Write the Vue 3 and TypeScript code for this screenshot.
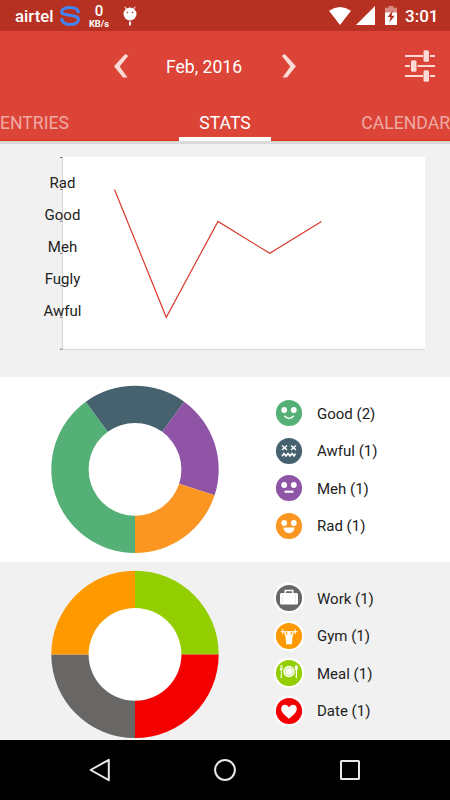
<script setup lang="ts">
interface Slice {
  name: string
  count: number
  color: string
}

const moods: Slice[] = [
  { name: 'Good', count: 2, color: '#54b077' },
  { name: 'Awful', count: 1, color: '#46626f' },
  { name: 'Meh', count: 1, color: '#8f54a5' },
  { name: 'Rad', count: 1, color: '#fb9623' },
]

const activities: Slice[] = [
  { name: 'Work', count: 1, color: '#686765' },
  { name: 'Gym', count: 1, color: '#ff9900' },
  { name: 'Meal', count: 1, color: '#92ce00' },
  { name: 'Date', count: 1, color: '#f50000' },
]

const OUTER = 83.7
const INNER = 46.4

function point(radius: number, turn: number): string {
  const angle = turn * Math.PI * 2
  return `${(84 + radius * Math.sin(angle)).toFixed(2)} ${(84.4 - radius * Math.cos(angle)).toFixed(2)}`
}

// Slices run clockwise, starting at the bottom of the ring.
function ring(slices: Slice[]) {
  const total = slices.reduce((sum, s) => sum + s.count, 0)
  let start = 0.5
  return slices.map((s) => {
    const end = start + s.count / total
    const large = end - start > 0.5 ? 1 : 0
    const d =
      `M${point(OUTER, start)}A${OUTER} ${OUTER} 0 ${large} 1 ${point(OUTER, end)}` +
      `L${point(INNER, end)}A${INNER} ${INNER} 0 ${large} 0 ${point(INNER, start)}Z`
    start = end
    return { d, color: s.color }
  })
}

const charts = [
  { key: 'moods', slices: moods, paths: ring(moods) },
  { key: 'activities', slices: activities, paths: ring(activities) },
]

const levels = ['Rad', 'Good', 'Meh', 'Fugly', 'Awful']
const ticks = [0, 1, 2, 3, 4, 5, 6]
const history = [1, 5, 2, 3, 2]
const line = history.map((v, i) => `${114.5 + i * 51.75},${13.5 + v * 31.95}`).join(' ')
</script>

<template>
  <div class="screen">
    <header class="status">
      <span class="carrier">airtel</span>
      <svg class="swirl" width="20" height="20" viewBox="0 0 20 20" fill="none" stroke="#4285f4" stroke-width="3">
        <path d="M18.600 7.200C18.200 3.400 14.500 1.500 10 1.500C5 1.500 1.600 3.300 1.600 6C1.600 10.200 18.400 8.300 18.400 13C18.400 16.600 14.800 18.500 10 18.500C5.500 18.500 1.900 16.500 1.500 12.200" />
      </svg>
      <span class="speed"><b>0</b><small>KB/s</small></span>
      <svg class="bug" width="14" height="20" viewBox="0 0 14 20">
        <path d="M3.200 3L1.800.6M10.800 3L12.200.6" stroke="#fff" stroke-width="1" />
        <circle cx="7" cy="8" r="6.500" fill="#fff" />
        <path d="M6.100 15.500h1.800v4H6.100z" fill="#fff" />
        <circle cx="4.400" cy="6.500" r=".8" fill="#b73122" />
        <circle cx="9.600" cy="6.500" r=".8" fill="#b73122" />
      </svg>
      <span class="grow"></span>
      <svg class="wifi" width="22" height="18" viewBox="0 0 22 18"><path d="M0 3.800Q11-3.600 22 3.800L11 18Z" fill="#fff" /></svg>
      <svg class="cell" width="19" height="19" viewBox="0 0 19 19"><path d="M19 0V19H0Z" fill="#fff" /></svg>
      <svg class="battery" width="12" height="19" viewBox="0 0 12 19">
        <path d="M3.500 0h5v1.800H12V7H0V1.800h3.500z" fill="#d9897f" />
        <path d="M0 6.500h12V19H0z" fill="#fff" />
        <path d="M7.800 4.500L2.500 11h3l-1.300 5.500L9.800 9.700H6.600z" fill="#b73122" />
      </svg>
      <span class="clock">3:01</span>
    </header>

    <div class="appbar">
      <div class="monthbar">
        <svg class="prev" width="15" height="24" viewBox="0 0 15 24"><path d="M14.300 1.800L11.200 0L0 12.300L9 23.500H13.500L5.700 12.500Z" fill="#fbd9d6" /></svg>
        <span class="month">Feb, 2016</span>
        <svg class="next" width="15" height="24" viewBox="0 0 15 24"><path d="M.7 1.800L3.800 0L15 12.300L6 23.500H1.500L9.300 12.500Z" fill="#fbd9d6" /></svg>
        <svg class="tune" width="30" height="32" viewBox="0 0 30 32" fill="#fbd9d6">
          <path d="M0 5h18v2H0zM25 5h5v2h-5zM0 15h5v2H0zM12.500 15H30v2H12.500zM0 25h18v2H0zM25 25h5v2h-5z" />
          <rect x="18.500" y=".3" width="5.500" height="11.500" rx="1.500" />
          <rect x="6" y="10.300" width="5.500" height="11.500" rx="1.500" />
          <rect x="18.500" y="20.300" width="5.500" height="11.500" rx="1.500" />
        </svg>
      </div>
      <nav class="tabs">
        <span class="tab side">ENTRIES</span>
        <span class="tab active">STATS</span>
        <span class="tab side last">CALENDAR</span>
      </nav>
    </div>

    <section class="trend">
      <svg width="450" height="233" viewBox="0 0 450 233">
        <path d="M62 13h363v192H62z" fill="#fff" />
        <path d="M62.500 13v192M62 205.300h363" stroke="#d6d6d6" fill="none" />
        <path v-for="t in ticks" :key="t" :d="`M60 ${13.500 + t * 31.950}h2.500`" stroke="#777" />
        <polyline :points="line" fill="none" stroke="#d83a2d" stroke-width="1.200" />
        <text v-for="(l, i) in levels" :key="l" class="level" x="62.500" :y="44 + i * 32">{{ l }}</text>
      </svg>
    </section>

    <section v-for="c in charts" :key="c.key" class="breakdown" :class="c.key">
      <svg class="ring" width="168" height="169" viewBox="0 0 168 169">
        <circle cx="84" cy="84.400" r="47" fill="#fff" />
        <path v-for="p in c.paths" :key="p.color" :d="p.d" :fill="p.color" />
      </svg>
      <ul class="legend">
        <li v-for="s in c.slices" :key="s.name">
          <svg width="32" height="32" viewBox="-16 -16 32 32" fill="#fff">
            <circle r="15.300" />
            <circle r="13.100" :fill="s.color" />
            <g v-if="s.name === 'Good'">
              <circle cx="-4.800" cy="-3" r="2.900" /><circle cx="4.800" cy="-3" r="2.900" />
              <path d="M-4.700 2.800Q0 8.200 4.700 2.800" fill="none" stroke="#fff" stroke-width="1.500" />
            </g>
            <g v-else-if="s.name === 'Awful'" fill="none" stroke="#fff" stroke-width="1.400">
              <path d="M-7-5.500L-2-1M-7-1L-2-5.500M2-5.500L7-1M2-1L7-5.500" />
              <path d="M-7 5.200L-5 2.500L-3 5L-1 2.500L1 5L3 2.500L5 5L6.500 2.700" stroke-width="1.600" />
            </g>
            <g v-else-if="s.name === 'Meh'">
              <circle cx="-4.800" cy="-3" r="2.900" /><circle cx="4.800" cy="-3" r="2.900" />
              <path d="M-4.500 2.600h9v2.200h-9z" />
            </g>
            <g v-else-if="s.name === 'Rad'">
              <circle cx="-4.800" cy="-3" r="2.900" /><circle cx="4.800" cy="-3" r="2.900" />
              <path d="M-5.500 1.500H5.500C5 9-5 9-5.500 1.500Z" />
            </g>
            <g v-else-if="s.name === 'Work'">
              <rect x="-9" y="-5" width="18" height="11.500" rx="1.500" />
              <path d="M-3.800-5v-2.500h7.600V-5" fill="none" stroke="#fff" stroke-width="1.400" />
              <path d="M-6.500-5V6.500M6.500-5V6.500" stroke="#d0cfcd" stroke-width=".4" />
            </g>
            <g v-else-if="s.name === 'Gym'">
              <path d="M-8.500-4.300h17M-6.200-7v5.200M6.200-7v5.200" stroke="#fff" stroke-width="1" />
              <path d="M-5-4.300L-3.600.3L-2.800 8.200H2.900L3.600.3L5-4.300H3.700L2.300-.9H-2.300L-3.700-4.300Z" />
              <circle cy="-2.800" r="2" />
            </g>
            <g v-else-if="s.name === 'Meal'">
              <circle cy="-1.500" r="5.700" />
              <circle cy="-1.500" r="4" fill="none" stroke="#92ce00" stroke-width=".5" />
              <path d="M-9-8v4.200q0 1 .8 1.400L-8.400 5h1.200l-.2-7.400q.9-.4.900-1.400V-8h-.5v3.500h-.5V-8h-.6v3.500h-.5V-8z" />
              <ellipse cx="7.300" cy="-5.300" rx="1.600" ry="2.600" />
              <path d="M6.800-3h1.100L8.100 5H6.600z" />
            </g>
            <path v-else d="M0 7.800C-3 4.800-7.800 2-7.800-2.200C-7.800-7-2-7.600 0-3.600C2-7.600 7.800-7 7.800-2.200C7.800 2 3 4.800 0 7.800Z" />
          </svg>
          <span>{{ s.name }} ({{ s.count }})</span>
        </li>
      </ul>
    </section>

    <footer class="navbar">
      <svg width="24" height="26" viewBox="0 0 24 26"><path d="M2.600 13L20.800 2.800V23.200Z" /></svg>
      <svg width="24" height="26" viewBox="0 0 24 26"><circle cx="12" cy="13" r="9.900" /></svg>
      <svg width="24" height="26" viewBox="0 0 24 26"><rect x="3" y="4" width="18" height="18" rx=".5" /></svg>
    </footer>
  </div>
</template>

<style>
body {
  margin: 0;
  background: #f1f1f1;
}
</style>

<style scoped>
.screen {
  display: flex;
  flex-direction: column;
  width: 450px;
  height: 800px;
  overflow: hidden;
  background: #f1f1f1;
  font-family: Roboto, "Liberation Sans", sans-serif;
}
svg {
  display: block;
  flex: none;
}
.status {
  display: flex;
  align-items: center;
  box-sizing: border-box;
  height: 31px;
  padding: 0 12px 0 15px;
  background: #b73122;
  color: #fff;
}
.carrier {
  width: 40px;
  font-size: 16.8px;
  font-weight: 500;
  line-height: 20px;
}
.swirl {
  margin-left: 5px;
}
.speed {
  display: flex;
  flex-direction: column;
  align-items: center;
  width: 22px;
  margin-left: 8px;
}
.speed b {
  font-size: 15px;
  font-weight: 500;
  line-height: 15px;
}
.speed small {
  font-size: 9.3px;
  font-weight: 700;
  line-height: 9px;
}
.bug {
  margin-left: 13px;
}
.grow {
  flex: 1;
}
.cell {
  margin-left: 5px;
}
.battery {
  margin-left: 10px;
}
.clock {
  width: 33px;
  margin: 1px 0 0 8px;
  font-size: 17px;
  font-weight: 500;
  line-height: 20px;
}
.appbar {
  box-sizing: border-box;
  height: 113px;
  background: #db4437;
  border-bottom: 3px solid #dadada;
}
.monthbar {
  display: flex;
  align-items: center;
  height: 72px;
  padding: 0 15px 0 114px;
  color: #fff;
}
.month {
  width: 78px;
  margin: 0 0 1px 37px;
  font-size: 17.6px;
  line-height: 20px;
  white-space: nowrap;
}
.prev,
.next {
  margin-top: -3px;
}
.next {
  margin-left: 37px;
}
.tune {
  margin: -2px 0 0 auto;
}
.tabs {
  display: grid;
  grid-template-columns: 179px 92px 179px;
  height: 38px;
  box-sizing: border-box;
  border-bottom: 1px solid #dd2c10;
}
.tab {
  box-sizing: border-box;
  height: 38px;
  padding-top: 9px;
  font-size: 17.6px;
  line-height: 22px;
  color: #fff;
}
.side {
  color: #f0aaa4;
}
.last {
  text-align: right;
}
.active {
  text-align: center;
  border-bottom: 4px solid #fff;
}
.trend {
  height: 233px;
}
.level {
  font-size: 15px;
  fill: #222;
  text-anchor: middle;
}
.breakdown {
  display: flex;
  box-sizing: border-box;
  padding-left: 51px;
}
.moods {
  height: 185px;
  padding-top: 8px;
  background: #fff;
}
.activities {
  height: 178px;
  padding-top: 8px;
}
.legend {
  display: flex;
  flex-direction: column;
  gap: 5.500px;
  margin: 12px 0 0 54px;
  padding: 0;
  list-style: none;
}
.legend li {
  display: flex;
  align-items: center;
  gap: 12px;
  height: 32px;
  font-size: 15px;
  color: #222;
}
.legend span {
  padding-top: 1px;
}
.navbar {
  display: flex;
  justify-content: space-between;
  box-sizing: border-box;
  height: 60px;
  padding: 17px 88px;
  background: #000;
}
.navbar svg {
  fill: none;
  stroke: #e8e8e8;
  stroke-width: 2;
  stroke-linejoin: round;
}
</style>
